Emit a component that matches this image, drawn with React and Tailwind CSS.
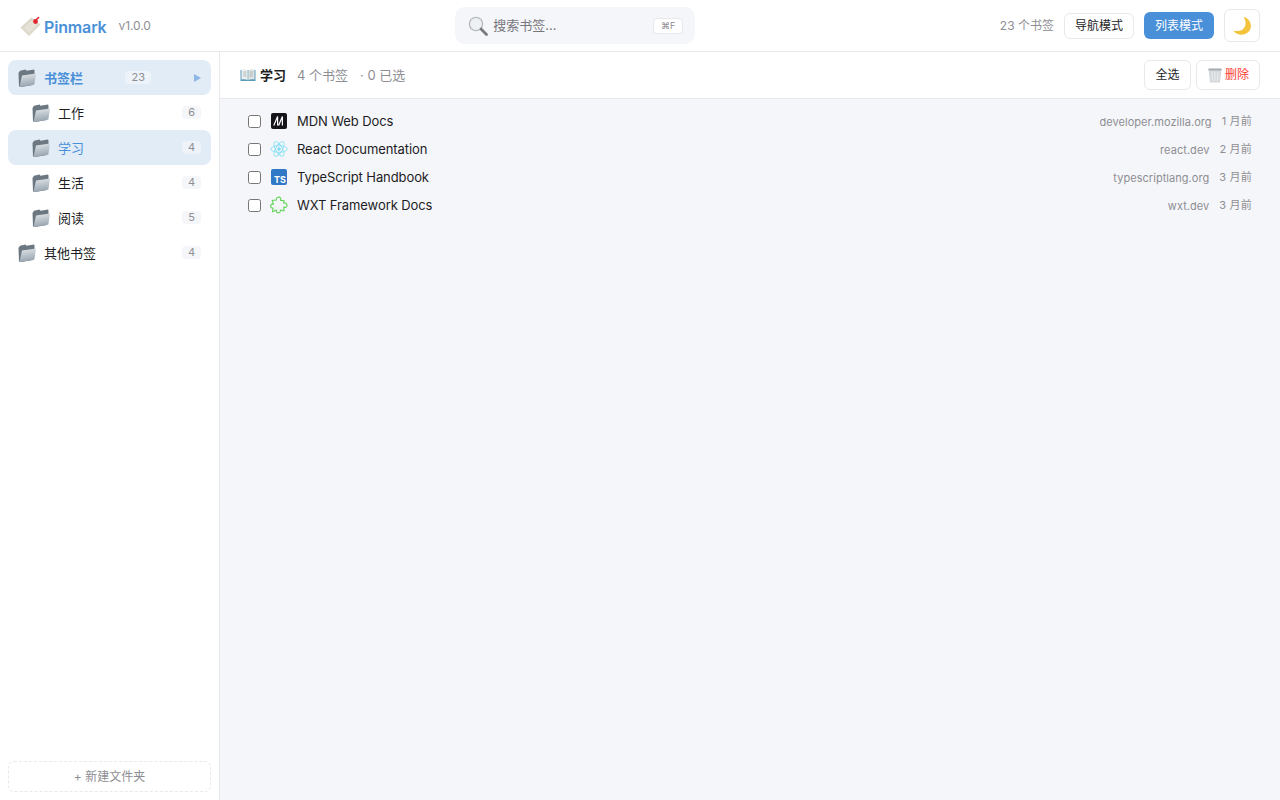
import React from "react";

const FolderIcon = ({ className }) => (
  <svg viewBox="0 0 20 20" className={className}>
    <defs>
      <linearGradient id="folderFront" x1="0" y1="0" x2="0.2" y2="1">
        <stop offset="0" stopColor="#e4e8eb" />
        <stop offset="1" stopColor="#98a5b0" />
      </linearGradient>
    </defs>
    <path d="M1.5 5 L2 18.5 L4 19 L16 17 L17.5 7 L17.5 2.5 L17 1.5 L9.5 2.8 L8.5 1.5 L3 2.8 Z" fill="#6b7781" />
    <path d="M5 7.4 L19 5.4 L17.4 16.4 L3.8 19 L2.6 18.6 Z" fill="url(#folderFront)" />
  </svg>
);

const SearchIcon = () => (
  <svg viewBox="0 0 22 22" className="h-[22px] w-[22px] shrink-0">
    <circle cx="9" cy="9" r="6.6" fill="#eef1f4" stroke="#b7bcc2" strokeWidth="1.4" />
    <path d="M14 14 L19.5 19.5" stroke="#77797c" strokeWidth="2.8" strokeLinecap="round" />
  </svg>
);

const MoonIcon = () => (
  <svg viewBox="0 0 20 20" className="h-5 w-5">
    <path d="M11.5 1 C16.5 2 19.6 6.6 18.8 11.6 C17.8 16.6 12.6 19.6 7.6 18.6 C5 18 2.8 16.6 1.2 14.4 C5.6 15.8 10 15 12.2 11.8 C14.4 8.4 14 4.4 11.5 1 Z" fill="#f5c33b" />
  </svg>
);

const TrashIcon = () => (
  <svg viewBox="0 0 16 16" className="h-4 w-4 shrink-0">
    <path d="M1.5 2 H14.5 L13 15.5 H3 Z" fill="#d5d9dc" />
    <path d="M1.5 1.5 H14.5 V3.4 H1.5 Z" fill="#a3abb0" />
    <path d="M5 5 L5.6 14 M8 5 V14 M11 5 L10.4 14" stroke="#eff1f2" strokeWidth="0.8" />
  </svg>
);

const BookIcon = () => (
  <svg viewBox="0 0 16 16" className="h-4 w-4 shrink-0">
    <path d="M0.5 3 H15.5 V14 H0.5 Z" fill="#5b9bb8" />
    <path d="M1.5 2.5 C3.5 2 6 2 7.7 3.2 V13 C6 12 3.5 12 1.5 12.5 Z" fill="#eef1f1" />
    <path d="M14.5 2.5 C12.5 2 10 2 8.3 3.2 V13 C10 12 12.5 12 14.5 12.5 Z" fill="#e0e4e4" />
    <path d="M3 5 H6.5 M3 7 H6.5 M3 9 H6.5 M9.5 5 H13 M9.5 7 H13 M9.5 9 H13" stroke="#9aa1a5" strokeWidth="0.7" />
  </svg>
);

const PinLogo = () => (
  <svg viewBox="0 0 24 22" className="h-[22px] w-[24px] shrink-0">
    <path d="M0.5 12.5 L11.5 2.5 L20.5 9.5 L9 21 Z" fill="#ddd8cc" />
    <path d="M4 12.5 L11.5 5.5 L17 10 L9 18 Z" fill="#e6e2d8" />
    <path d="M15 6 L18.5 2.5" stroke="#e3262e" strokeWidth="1.6" strokeLinecap="round" />
    <circle cx="15.5" cy="6.5" r="2.4" fill="#e3262e" />
  </svg>
);

const MdnIcon = () => (
  <svg viewBox="0 0 16 16" className="h-4 w-4">
    <rect width="16" height="16" rx="2" fill="#15141a" />
    <path d="M2.8 12.5 L6.6 3.5 V12.5 M7.6 12.5 L11.4 3.5 V12.5" fill="none" stroke="#fff" strokeWidth="1.2" />
  </svg>
);

const ReactIcon = () => (
  <svg viewBox="-12 -12 24 24" className="h-[18px] w-[18px] shrink-0">
    <circle r="2.4" fill="#7fdcf3" />
    <g fill="none" stroke="#8ae0f5" strokeWidth="1.2">
      <ellipse rx="11" ry="4.4" />
      <ellipse rx="11" ry="4.4" transform="rotate(60)" />
      <ellipse rx="11" ry="4.4" transform="rotate(120)" />
    </g>
  </svg>
);

const TsIcon = () => (
  <div className="flex h-4 w-4 items-end justify-end rounded-[2px] bg-[#3178c6] pr-[1px] text-[9px] font-bold leading-[11px] text-white">
    TS
  </div>
);

const WxtIcon = () => (
  <svg viewBox="0 0 18 18" className="h-[18px] w-[18px] shrink-0">
    <path
      d="M6.4 4 C5.4 1.2 10.2 0 10.8 2.6 C11 3.4 10.6 3.8 10.6 4.4 L14 4.6 L13.8 7.2 C16.4 6.2 18.2 9.8 15.8 11.2 C15 11.6 14.4 11.2 13.8 11 L14 14.8 L10.4 14 C11 16.8 7.2 18 6.4 15.4 C6.2 14.8 6.4 14.4 6.4 14 L2.6 15.8 L3 12 C0.8 12.6 -0.2 9.4 1.6 8.2 C2.2 7.8 2.8 8.2 3.4 8.4 L2.2 4.4 Z"
      fill="none"
      stroke="#67d55e"
      strokeWidth="1.2"
      strokeLinejoin="round"
    />
  </svg>
);

const folders = [
  { name: "书签栏", count: 23, root: true, open: true, bold: true },
  { name: "工作", count: 6 },
  { name: "学习", count: 4, active: true },
  { name: "生活", count: 4 },
  { name: "阅读", count: 5 },
  { name: "其他书签", count: 4, root: true },
];

const bookmarks = [
  { title: "MDN Web Docs", domain: "developer.mozilla.org", date: "1 月前", icon: <MdnIcon /> },
  { title: "React Documentation", domain: "react.dev", date: "2 月前", icon: <ReactIcon /> },
  { title: "TypeScript Handbook", domain: "typescriptlang.org", date: "3 月前", icon: <TsIcon /> },
  { title: "WXT Framework Docs", domain: "wxt.dev", date: "3 月前", icon: <WxtIcon /> },
];

const FolderRow = ({ item }) => {
  const highlighted = item.open || item.active;
  return (
    <div
      className={`flex h-[35px] items-center rounded-lg pr-[10px] ${item.root ? "pl-[9px]" : "pl-[23px]"} ${highlighted ? "bg-[#e2ecf7]" : ""}`}
    >
      <FolderIcon className="h-5 w-5 shrink-0" />
      <span
        className={`ml-[7px] pt-[2px] text-[13px] ${highlighted ? "text-[#4a90d9]" : "text-[#1d1d1f]"} ${item.bold ? "font-semibold" : ""}`}
      >
        {item.name}
      </span>
      {item.open ? (
        <>
          <span className="ml-auto mr-[43px] flex h-[13px] items-center rounded-[4px] bg-[#edf3f9] px-[6px] text-[11px] text-[#8e8e93]">
            {item.count}
          </span>
          <span className="h-0 w-0 border-y-[4px] border-l-[7px] border-y-transparent border-l-[#8db8e6]" />
        </>
      ) : (
        <span
          className={`ml-auto flex h-[13px] items-center rounded-[4px] px-[6px] text-[11px] text-[#8e8e93] ${item.active ? "bg-[#edf3f9]" : "bg-[#f5f6fa]"}`}
        >
          {item.count}
        </span>
      )}
    </div>
  );
};

const App = () => {
  return (
    <div
      className="flex h-[800px] w-[1280px] flex-col overflow-hidden bg-[#f5f6fa] text-[#1d1d1f]"
      style={{ fontFamily: '"Inter", "Noto Sans CJK SC", sans-serif' }}
    >
      <header className="flex h-[52px] shrink-0 items-center justify-between border-b border-[#e8e8ed] bg-white px-5">
        <div className="flex items-center">
          <PinLogo />
          <span className="pt-[2px] text-[16px] font-semibold tracking-[-0.15px] text-[#4a90d9]">Pinmark</span>
          <span className="ml-3 text-[12px] tracking-[-0.1px] text-[#8e8e93]">v1.0.0</span>
        </div>
        <div className="flex h-[37px] w-[240px] items-center rounded-[10px] bg-[#f5f6fa] px-3">
          <SearchIcon />
          <span className="ml-[4px] text-[13px] text-[#77777c]">搜索书签...</span>
          <span className="ml-auto flex h-[16px] items-center rounded-[4px] border border-[#e8e8ed] bg-white px-[7px] text-[9px] text-[#8e8e93]">
            ⌘F
          </span>
        </div>
        <div className="flex items-center">
          <span className="mr-[10px] text-[12px] text-[#8e8e93]">23 个书签</span>
          <button className="mr-[10px] flex h-[26px] items-center rounded-md border border-[#e8e8ed] bg-white px-[10px] text-[12px] text-[#1d1d1f]">
            导航模式
          </button>
          <button className="mr-[10px] flex h-[27px] items-center rounded-md bg-[#4a90d9] px-[11px] text-[12px] text-white">
            列表模式
          </button>
          <button className="flex h-[33px] w-9 items-center justify-center rounded-md border border-[#e8e8ed] bg-white">
            <MoonIcon />
          </button>
        </div>
      </header>

      <div className="flex min-h-0 flex-1">
        <aside className="flex w-[220px] shrink-0 flex-col border-r border-[#e8e8ed] bg-white p-2">
          <div className="flex flex-1 flex-col">
            {folders.map((item) => (
              <FolderRow key={item.name} item={item} />
            ))}
          </div>
          <div className="flex h-[31px] items-center justify-center rounded-md border border-dashed border-[#e8e8ed] text-[12px] text-[#8e8e93]">
            + 新建文件夹
          </div>
        </aside>

        <main className="flex min-w-0 flex-1 flex-col">
          <div className="flex h-[47px] shrink-0 items-center border-b border-[#e8e8ed] bg-white px-5">
            <BookIcon />
            <span className="ml-1 pt-[2px] text-[13px] font-semibold">学习</span>
            <span className="ml-[11px] pt-[2px] text-[13px] text-[#8e8e93]">4 个书签</span>
            <span className="ml-3 pt-[2px] text-[13px] text-[#8e8e93]">· 0 已选</span>
            <button className="ml-auto flex h-[30px] items-center rounded-md border border-[#e8e8ed] bg-white px-[10.5px] text-[12px] text-[#1d1d1f]">
              全选
            </button>
            <button className="ml-[5px] flex h-[30px] items-center rounded-md border border-[#e8e8ed] bg-white px-[10px] text-[12px] text-[#ff3b30]">
              <TrashIcon />
              <span className="ml-[2px]">删除</span>
            </button>
          </div>

          <div className="px-5 py-2">
            {bookmarks.map((b) => (
              <div key={b.title} className="flex h-7 items-center px-2">
                <span className="h-[13px] w-[13px] shrink-0 rounded-[2.5px] border border-[#767676] bg-white" />
                <span className="ml-[10px] flex w-4 shrink-0 items-center justify-center">{b.icon}</span>
                <span className="ml-[10px] pt-[2px] text-[13px] tracking-[-0.09px]">{b.title}</span>
                <span className="ml-auto pt-[2px] text-[11px] tracking-[0.05px] text-[#8e8e93]">{b.domain}</span>
                <span className="ml-[10px] text-[11px] tracking-[0.2px] text-[#8e8e93]">{b.date}</span>
              </div>
            ))}
          </div>
        </main>
      </div>
    </div>
  );
};

export default App;
